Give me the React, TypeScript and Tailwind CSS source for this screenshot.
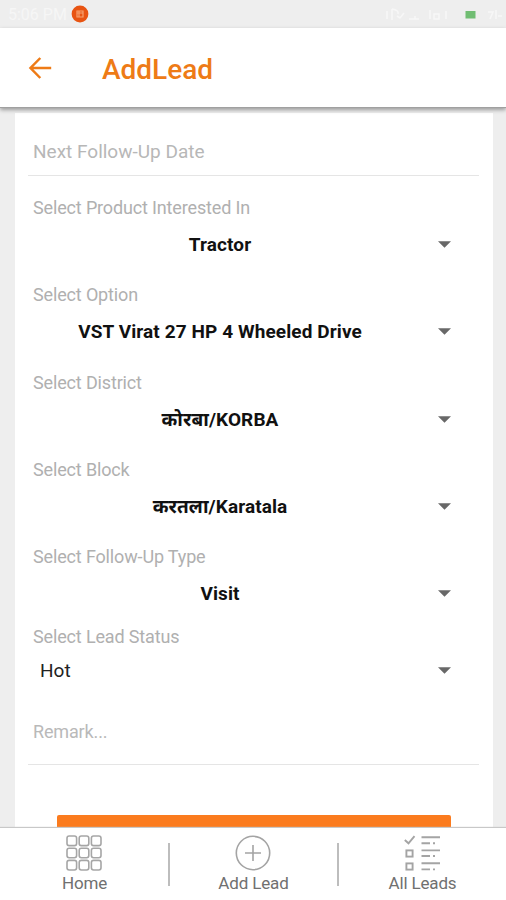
import React from "react";

const fontStack = "font-['Roboto','Noto_Sans','Liberation_Sans',sans-serif]";

function Caret() {
  return (
    <svg width="13" height="7" viewBox="0 0 13 7" className="mr-7 mb-px shrink-0">
      <path d="M0 0.2H13L6.5 6.8Z" fill="#686868" />
    </svg>
  );
}

type FieldProps = { label: string; value: string };

function SelectField({ label, value }: FieldProps) {
  return (
    <div className="h-[87.2px]">
      <div className="h-6 whitespace-nowrap pl-[5px] text-[18px] leading-6 tracking-[-0.15px] text-[#b0b0b0]">{label}</div>
      <div className="mt-[5px] flex h-10 items-center">
        <div className="mr-[31px] flex-1 pl-[5px] text-center text-[19px] font-bold leading-10 tracking-[0.1px] text-[#111]">
          {value}
        </div>
        <Caret />
      </div>
    </div>
  );
}

const fields: FieldProps[] = [
  { label: "Select Product Interested In", value: "Tractor" },
  { label: "Select Option", value: "VST Virat 27 HP 4 Wheeled Drive" },
  { label: "Select District", value: "कोरबा/KORBA" },
  { label: "Select Block", value: "करतला/Karatala" },
  { label: "Select Follow-Up Type", value: "Visit" },
];

function StatusBar() {
  return (
    <div className="flex h-7 shrink-0 items-center bg-[#eeeeee] text-[16px] text-[#f6f6f6]">
      <span className="ml-2 mt-[2px] w-[63px] whitespace-nowrap">5:06 PM</span>
      <svg width="18" height="18" viewBox="0 0 18 18">
        <circle cx="9" cy="9" r="8.4" fill="#e85412" />
        <path d="M6 6h6v6H6zM6 8h6M8 6v6" fill="none" stroke="#f7a16f" strokeWidth="1.2" />
      </svg>
      <svg width="120" height="20" viewBox="-4 0 120 20" className="ml-auto">
        <g fill="none" stroke="#f7f7f7" strokeWidth="1.6">
          <path d="M-3 7v8M2 5v11M2 5q7 1 6 5M7 12l3 2 4-5M19 15h10M25 12v3M40 6v9M44 10h5v5h-5zM56 7v8" />
          <path d="M98 8h5l-3 7M106 6v9M108 12h4" />
        </g>
        <rect x="75.5" y="7" width="10" height="7.5" fill="#70bd72" />
      </svg>
    </div>
  );
}

function GridIcon() {
  return (
    <svg width="36" height="36" viewBox="0 0 36 36" fill="none" stroke="#a6a6a6" strokeWidth="1.6">
      {[1, 13.2, 25.4].map((y) =>
        [1, 13.2, 25.4].map((x) => <rect key={`${x}-${y}`} x={x} y={y} width="9.6" height="9.6" rx="2.2" />)
      )}
    </svg>
  );
}

function PlusIcon() {
  return (
    <svg width="36" height="36" viewBox="0 0 36 36" fill="none" stroke="#a4a4a4" strokeWidth="1.6">
      <circle cx="18" cy="18" r="16.7" />
      <path d="M18 10V26M10 18H26" />
    </svg>
  );
}

function ListIcon() {
  return (
    <svg width="36" height="36" viewBox="0 0 36 36" fill="none" stroke="#a4a4a4" strokeWidth="1.9">
      <path d="M0.8 5L4.5 8.3L10.5 1.2" />
      <rect x="2.4" y="15.4" width="6.2" height="6.2" />
      <rect x="2.4" y="28.4" width="6.2" height="6.2" />
      <path d="M17.5 2.3H36M17.5 15.4H36M17.5 28.2H36" />
      <path d="M17.5 8.3H26M29 8.3H31M17.5 21H26M29 21H31M17.5 34.4H26M29 34.4H31" />
    </svg>
  );
}

function NavItem({ icon, label }: { icon: React.ReactNode; label: string }) {
  return (
    <div className="flex w-[167px] flex-col items-center pt-[7px]">
      <div className="mr-px">{icon}</div>
      <span className="mt-[2px] whitespace-nowrap text-[17px] leading-5 tracking-[-0.15px] text-[#707070]">{label}</span>
    </div>
  );
}

export default function App() {
  return (
    <div className={`flex h-[900px] w-[506px] flex-col overflow-hidden bg-[#eeeeee] ${fontStack}`}>
      <StatusBar />
      <header className="z-10 flex h-[80px] shrink-0 items-center border-b border-[#a0a0a0] bg-white shadow-[0_2px_4px_rgba(0,0,0,0.35)]">
        <svg width="24" height="24" viewBox="0 0 24 24" className="ml-7" fill="none" stroke="#ee7b16" strokeWidth="2.5">
          <path d="M23.2 12H2.5M12.3 2L2.5 12L12.3 22" />
        </svg>
        <h1 className="ml-[50px] mt-[4px] text-[28px] font-medium leading-8 text-[#ee7b16]">AddLead</h1>
      </header>
      <main className="min-h-0 flex-1 overflow-hidden px-[15px] pr-[13px] pt-[5px]">
        <div className="h-[720px] bg-white px-[13px] pr-[14px]">
          <div className="flex h-[63px] items-center border-b border-[#e5e5e5] pl-[5px] pt-[17px] text-[19px] text-[#b7b7b7]">
            <span className="whitespace-nowrap">Next Follow-Up Date</span>
          </div>
          <div className="pt-[20.2px]">
            {fields.map((f) => (
              <SelectField key={f.label} {...f} />
            ))}
          </div>
          <div className="-mt-[7px] h-6 pl-[5px] text-[18px] leading-6 tracking-[-0.15px] text-[#b0b0b0]">Select Lead Status</div>
          <div className="mt-[2px] flex h-10 items-center justify-between pl-3 text-[19px] text-[#222]">
            <span>Hot</span>
            <Caret />
          </div>
          <div className="mt-[29px] h-[45px] border-b border-[#e5e5e5] pl-[5px] text-[18px] leading-6 tracking-[-0.15px] text-[#b9b9b9]">Remark...</div>
          <div className="ml-[29px] mr-[28px] mt-[50px] h-12 rounded-[2px] bg-[#fb7b1e]" />
        </div>
      </main>
      <nav className="z-10 flex h-[72px] shrink-0 bg-white pl-px shadow-[0_-1px_1px_#c8c8c8]">
        <NavItem icon={<GridIcon />} label="Home" />
        <div className="mt-[15px] h-[43px] w-[2px] bg-[#bdbdbd]" />
        <NavItem icon={<PlusIcon />} label="Add Lead" />
        <div className="mt-[15px] h-[43px] w-[2px] bg-[#bdbdbd]" />
        <NavItem icon={<ListIcon />} label="All Leads" />
      </nav>
    </div>
  );
}
